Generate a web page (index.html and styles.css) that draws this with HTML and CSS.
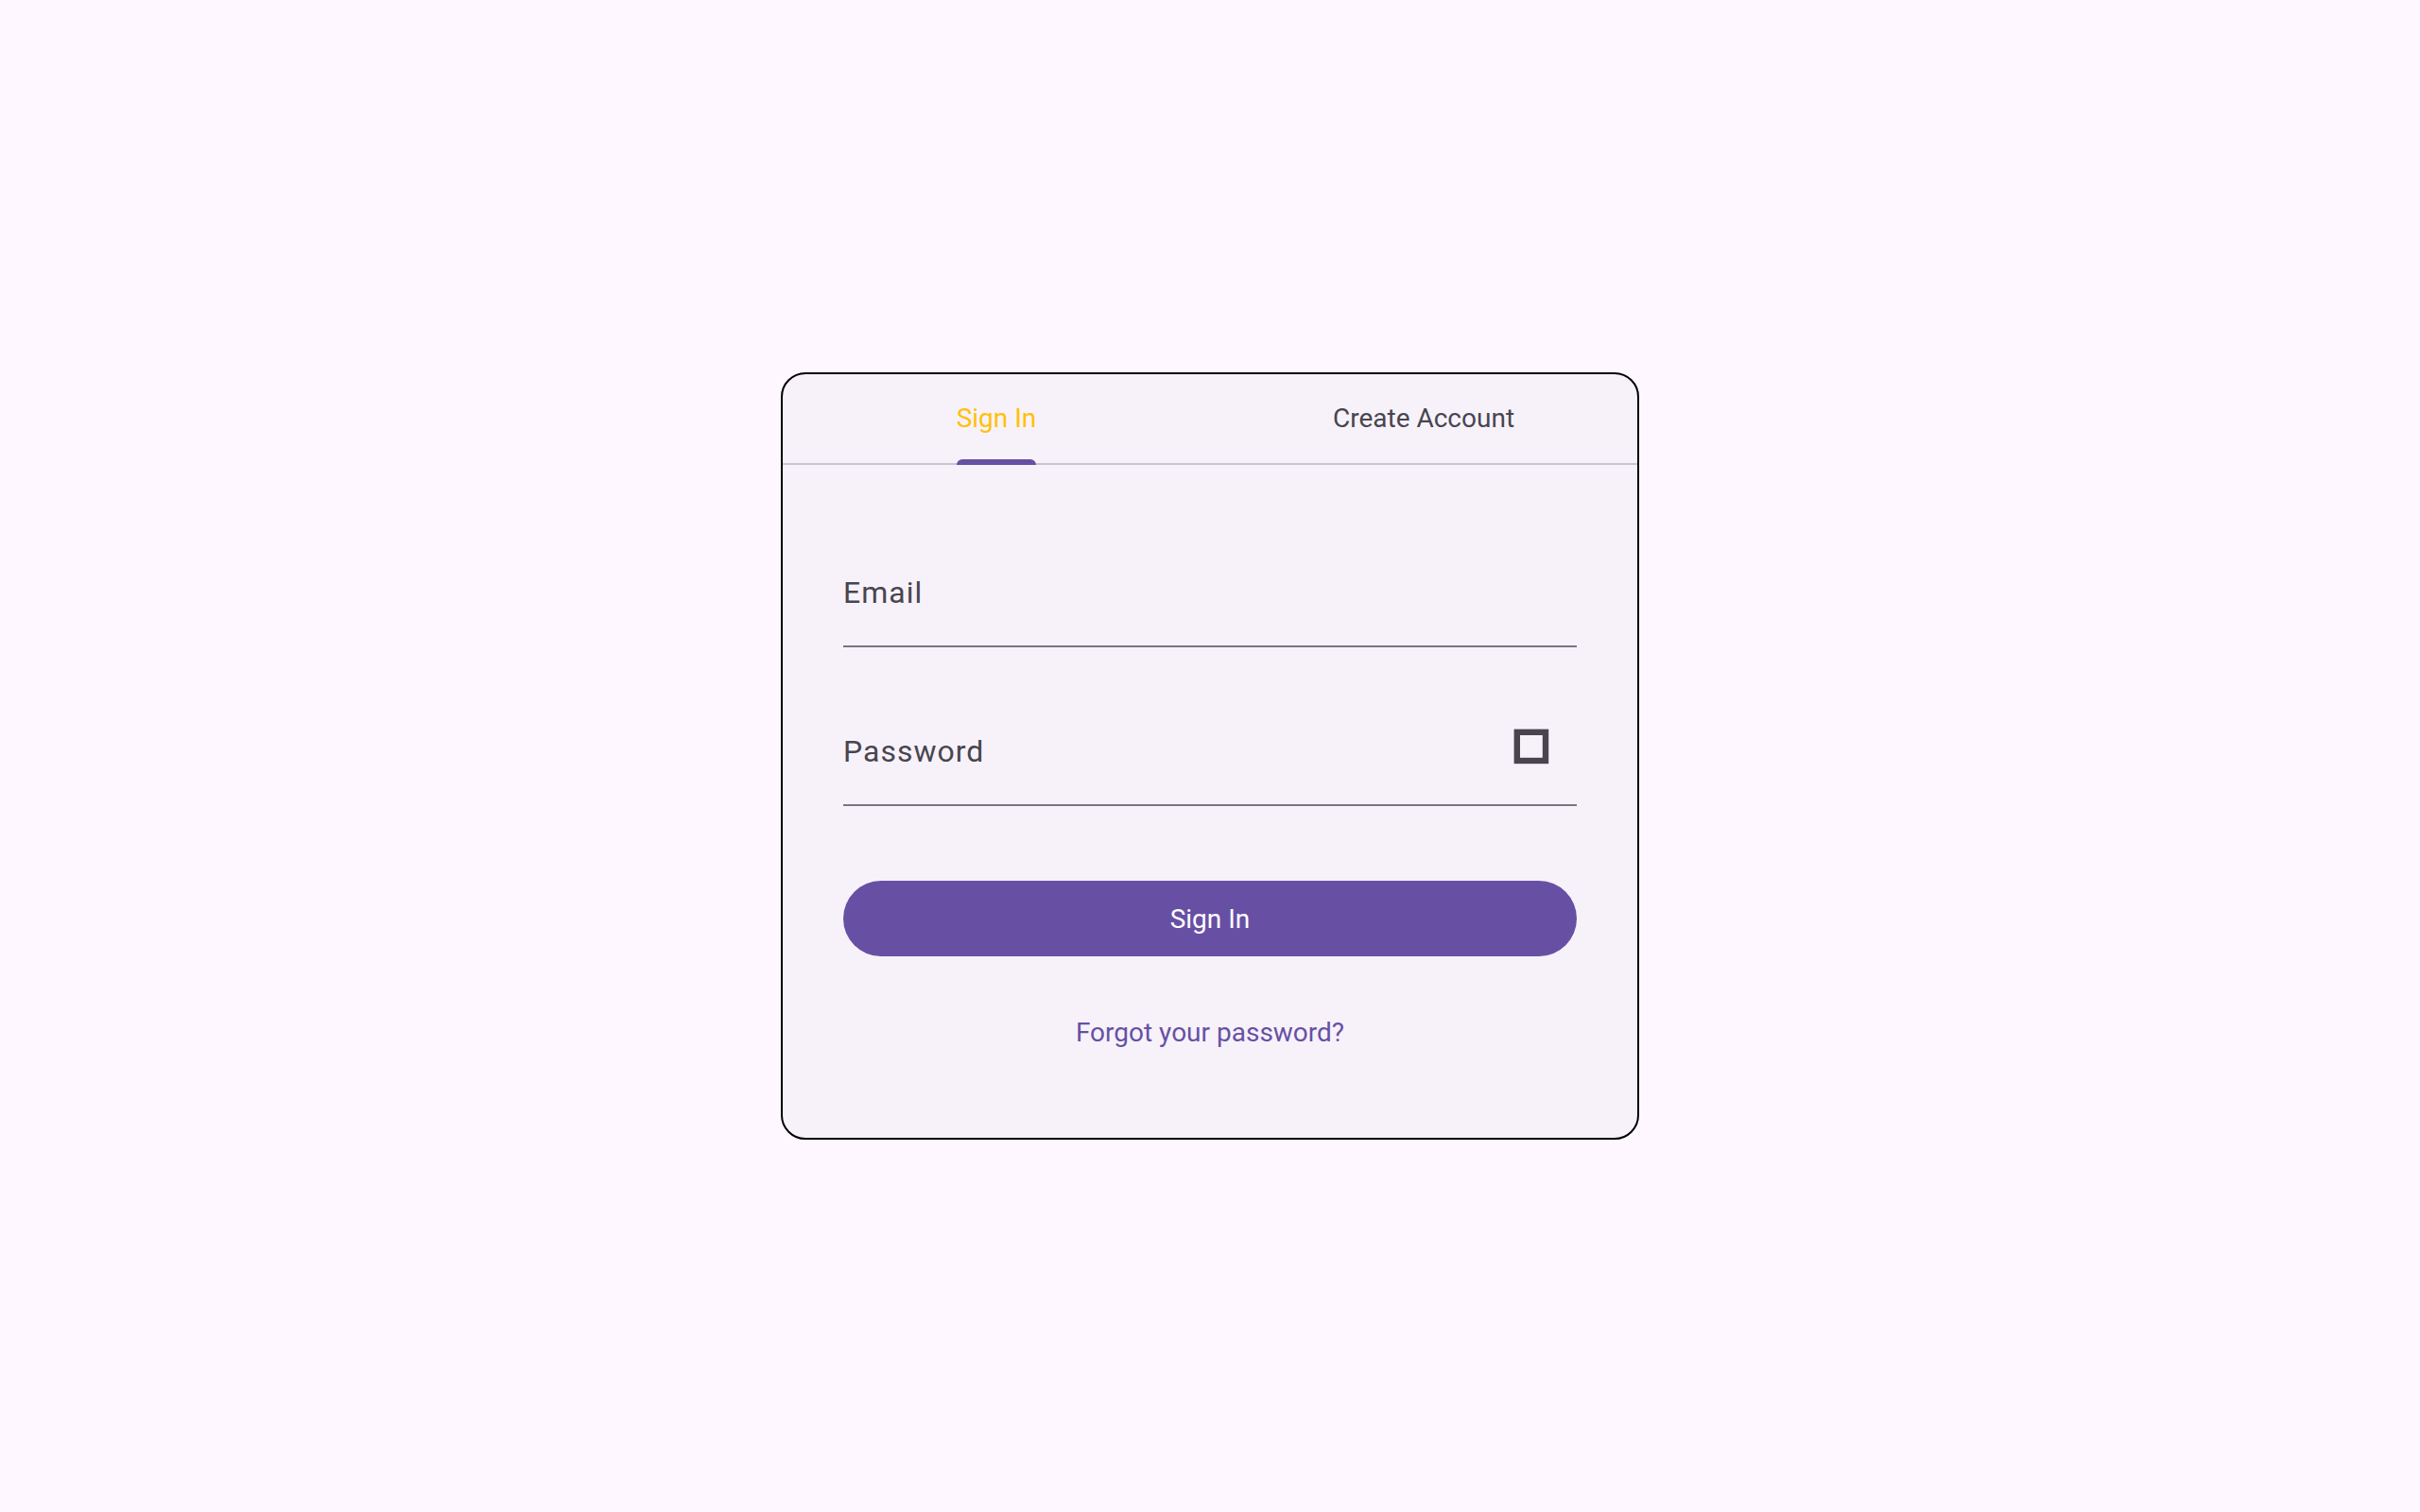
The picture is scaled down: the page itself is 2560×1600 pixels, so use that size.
FILE: index.html
```html
<!DOCTYPE html>
<html lang="en">
<head>
  <meta charset="utf-8">
  <meta name="viewport" content="width=device-width, initial-scale=1">
  <title>Sign In</title>
  <link rel="stylesheet" href="styles.css">
</head>
<body>
  <main class="card">
    <div class="tabs" role="tablist">
      <button class="tab tab-active" type="button" role="tab" aria-selected="true"><span class="tab-label">Sign In</span></button>
      <button class="tab" type="button" role="tab" aria-selected="false"><span class="tab-label">Create Account</span></button>
    </div>
    <form class="form">
      <div class="field">
        <label class="field-label" for="email">Email</label>
        <input class="field-input" id="email" type="email" autocomplete="email">
      </div>
      <div class="field">
        <label class="field-label" for="password">Password</label>
        <input class="field-input" id="password" type="password" autocomplete="current-password">
        <button class="reveal" type="button" aria-label="Show password">
          <svg class="reveal-icon" viewBox="0 0 38 38" aria-hidden="true">
            <rect x="3.8" y="3.8" width="30.2" height="30.2" fill="none" stroke="currentColor" stroke-width="6.4"/>
          </svg>
        </button>
      </div>
      <button class="submit" type="submit">Sign In</button>
      <a class="forgot" href="#forgot">Forgot your password?</a>
    </form>
  </main>
</body>
</html>
```

FILE: styles.css
```css
:root {
  --primary: #6750a4;
  --text: #49454f;
  --surface: #f7f2fa;
}

* {
  box-sizing: border-box;
}

body {
  margin: 0;
  min-height: 100vh;
  display: grid;
  place-items: center;
  background: #fef7ff;
  color: var(--text);
  font-family: Roboto, sans-serif;
  font-size: 28px;
  font-weight: 400;
  line-height: 40px;
}

button,
input {
  margin: 0;
  padding: 0;
  border: 0;
  background: none;
  color: inherit;
  font: inherit;
}

button {
  cursor: pointer;
}

.card {
  width: 100%;
  max-width: 908px;
  border: 2px solid #000;
  border-radius: 26px;
  background: var(--surface);
  overflow: hidden;
}

.tabs {
  display: grid;
  grid-template-columns: 1fr 1fr;
  height: 96px;
  box-shadow: inset 0 -2px #cac4d0;
}

.tab {
  display: flex;
  justify-content: center;
}

.tab-label {
  display: flex;
  align-items: center;
  position: relative;
  height: 100%;
  padding-bottom: 2px;
}

.tab-active {
  color: #ffc107;
}

.tab-active .tab-label::after {
  content: "";
  position: absolute;
  inset: auto 0 0;
  height: 6px;
  border-radius: 6px 6px 0 0;
  background: var(--primary);
}

.form {
  display: flex;
  flex-direction: column;
  padding: 81px 64px 71px;
}

.field {
  display: grid;
  grid-template-columns: 1fr 96px;
  height: 112px;
  margin-bottom: 56px;
  border-bottom: 2px solid #79747e;
  font-size: 32px;
  letter-spacing: 1px;
}

.field-label,
.field-input {
  grid-area: 1 / 1;
  align-self: center;
}

.field-label {
  padding-bottom: 2px;
}

.field-input {
  height: 100%;
  outline: none;
}

.field:has(:focus) {
  border-color: var(--primary);
}

.reveal {
  display: grid;
  place-items: center;
  height: 98px;
}

.reveal-icon {
  display: block;
  width: 38px;
  height: 38px;
}

.submit {
  height: 80px;
  margin-top: 23px;
  padding-top: 2px;
  border-radius: 40px;
  background: var(--primary);
  color: #fff;
}

.forgot {
  align-self: center;
  margin-top: 41px;
  padding: 20px 24px;
  color: var(--primary);
  text-decoration: none;
}
```
